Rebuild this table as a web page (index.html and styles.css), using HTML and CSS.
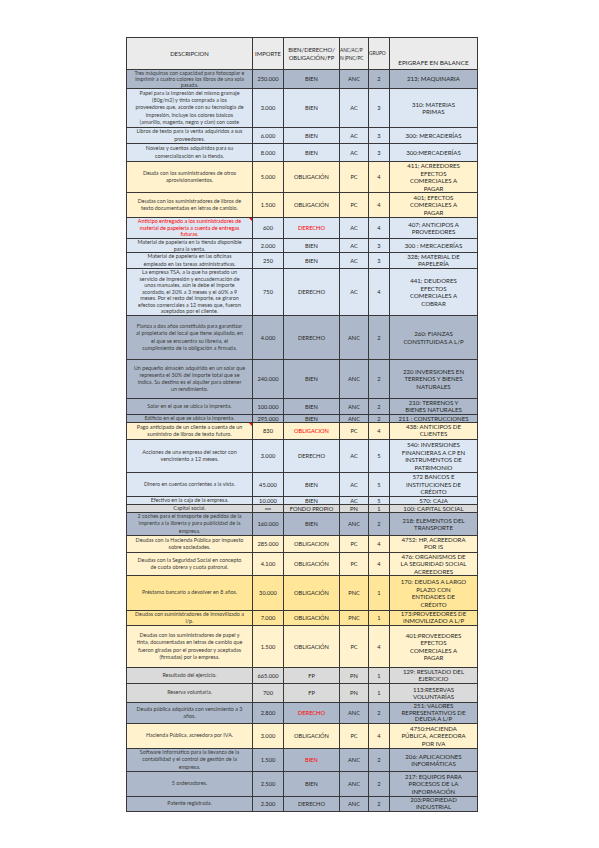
FILE: index.html
```html
<!DOCTYPE html>
<html lang="es">
<head>
<meta charset="utf-8">
<title>Clasificación de elementos patrimoniales</title>
<link rel="stylesheet" href="styles.css">
</head>
<body>
<div class="page">
  <div class="sheet">
    <div class="row head">
      <div class="h-desc">DESCRIPCION</div>
      <div class="h-imp">IMPORTE</div>
      <div class="h-bien">BIEN/DERECHO/<br>OBLIGACIÓN/FP</div>
      <div class="h-left h-anc">ANC/AC/P<br>N (PNC/PC</div>
      <div class="h-left h-grupo">GRUPO</div>
      <div class="h-epi">EPIGRAFE EN BALANCE</div>
    </div>

    <div class="row anc">
      <div class="desc lh6">Tres máquinas con capacidad para fotocopiar e<br>imprimir a cuatro colores los libros de una sola<br>pasada.</div>
      <div>250.000</div><div>BIEN</div><div>ANC</div><div>2</div><div class="epi">213; MAQUINARIA</div>
    </div>
    <div class="row ac">
      <div class="desc">Papel para la impresión del mismo gramaje<br>(80g/m2) y tinta comprada a los<br>proveedores que, acorde con su tecnología de<br>impresión, incluye los colores básicos<br>(amarillo, magenta, negro y cian) con coste</div>
      <div>3.000</div><div>BIEN</div><div>AC</div><div>3</div><div class="epi">310: MATERIAS<br>PRIMAS</div>
    </div>
    <div class="row ac">
      <div class="desc">Libros de texto para la venta adquiridos a sus<br>proveedores.</div>
      <div>6.000</div><div>BIEN</div><div>AC</div><div>3</div><div class="epi">300: MERCADERÍAS</div>
    </div>
    <div class="row ac">
      <div class="desc">Novelas y cuentos adquiridos para su<br>comercialización en la tienda.</div>
      <div>8.000</div><div>BIEN</div><div>AC</div><div>3</div><div class="epi">300:MERCADERÍAS</div>
    </div>
    <div class="row pc">
      <div class="desc">Deuda con los suministradores de otros<br>aprovisionamientos.</div>
      <div>5.000</div><div>OBLIGACIÓN</div><div>PC</div><div>4</div><div class="epi">411; ACREEDORES<br>EFECTOS<br>COMERCIALES A<br>PAGAR</div>
    </div>
    <div class="row pc">
      <div class="desc">Deudas con los suministradores de libros de<br>texto documentadas en letras de cambio.</div>
      <div>1.500</div><div>OBLIGACIÓN</div><div>PC</div><div>4</div><div class="epi">401; EFECTOS<br>COMERCIALES A<br>PAGAR</div>
    </div>
    <div class="row ac">
      <div class="desc lh65 red note">Anticipo entregado a los suministradores de<br>material de papelería a cuenta de entregas<br>futuras.</div>
      <div>600</div><div class="red">DERECHO</div><div>AC</div><div>4</div><div class="epi">407; ANTICIPOS A<br>PROVEEDORES</div>
    </div>
    <div class="row ac">
      <div class="desc lh65">Material de papelería en la tienda disponible<br>para la venta.</div>
      <div>2.000</div><div>BIEN</div><div>AC</div><div>3</div><div class="epi">300 : MERCADERÍAS</div>
    </div>
    <div class="row ac">
      <div class="desc">Material de papelería en las oficinas<br>empleado en las tareas administrativas.</div>
      <div>250</div><div>BIEN</div><div>AC</div><div>3</div><div class="epi tight">328; MATERIAL DE<br>PAPELERÍA</div>
    </div>
    <div class="row ac">
      <div class="desc lh65">La empresa TSA, a la que ha prestado un<br>servicio de impresión y encuadernación de<br>unos manuales, aún le debe el importe<br>acordado, el 20% a 3 meses y el 60% a 9<br>meses. Por el resto del importe, se giraron<br>efectos comerciales a 12 meses que, fueron<br>aceptados por el cliente.</div>
      <div>750</div><div>DERECHO</div><div>AC</div><div>4</div><div class="epi">441; DEUDORES<br>EFECTOS<br>COMERCIALES A<br>COBRAR</div>
    </div>
    <div class="row anc">
      <div class="desc">Fianza a dos años constituida para garantizar<br>al propietario del local que tiene alquilado, en<br>el que se encuentra su librería, el<br>cumplimiento de la obligación a firmada.</div>
      <div>4.000</div><div>DERECHO</div><div>ANC</div><div>2</div><div class="epi">260: FIANZAS<br>CONSTITUIDAS A L/P</div>
    </div>
    <div class="row anc">
      <div class="desc">Un pequeño almacén adquirido en un solar que<br>representa el 30% del importe total que se<br>indica. Su destino es el alquiler para obtener<br>un rendimiento.</div>
      <div>240.000</div><div>BIEN</div><div>ANC</div><div>2</div><div class="epi">220 INVERSIONES EN<br>TERRENOS Y BIENES<br>NATURALES</div>
    </div>
    <div class="row anc">
      <div class="desc">Solar en el que se ubica la imprenta.</div>
      <div>100.000</div><div>BIEN</div><div>ANC</div><div>2</div><div class="epi tight">210: TERRENOS Y<br>BIENES NATURALES</div>
    </div>
    <div class="row anc">
      <div class="desc lh7">Edificio en el que se ubica la imprenta.</div>
      <div>295.000</div><div>BIEN</div><div>ANC</div><div>2</div><div class="epi lh7">211 : CONSTRUCCIONES</div>
    </div>
    <div class="row pc">
      <div class="desc note">Pago anticipado de un cliente a cuenta de un<br>suministro de libros de texto futuro.</div>
      <div>830</div><div class="red">OBLIGACION</div><div>PC</div><div>4</div><div class="epi tight">438: ANTICIPOS DE<br>CLIENTES</div>
    </div>
    <div class="row ac">
      <div class="desc">Acciones de una empresa del sector con<br>vencimiento a 12 meses.</div>
      <div>3.000</div><div>DERECHO</div><div>AC</div><div>5</div><div class="epi">540: INVERSIONES<br>FINANCIERAS A CP EN<br>INSTRUMENTOS DE<br>PATRIMONIO</div>
    </div>
    <div class="row ac">
      <div class="desc">Dinero en cuentas corrientes a la vista.</div>
      <div>45.000</div><div>BIEN</div><div>AC</div><div>5</div><div class="epi">572 BANCOS E<br>INSTITUCIONES DE<br>CRÉDITO</div>
    </div>
    <div class="row ac">
      <div class="desc lh7">Efectivo en la caja de la empresa.</div>
      <div>10.000</div><div>BIEN</div><div>AC</div><div>5</div><div class="epi lh7">570: CAJA</div>
    </div>
    <div class="row pn">
      <div class="desc lh7">Capital social.</div>
      <div class="tiny">xxx</div><div>FONDO PROPIO</div><div>PN</div><div>1</div><div class="epi lh7">100: CAPITAL SOCIAL</div>
    </div>
    <div class="row anc">
      <div class="desc">2 coches para el transporte de pedidos de la<br>imprenta a la librería y para publicidad de la<br>empresa.</div>
      <div>160.000</div><div>BIEN</div><div>ANC</div><div>2</div><div class="epi">218: ELEMENTOS DEL<br>TRANSPORTE</div>
    </div>
    <div class="row pc">
      <div class="desc">Deudas con la Hacienda Pública por impuesto<br>sobre sociedades.</div>
      <div>285.000</div><div>OBLIGACION</div><div>PC</div><div>4</div><div class="epi tight">4752: HP, ACREEDORA<br>POR IS</div>
    </div>
    <div class="row pc">
      <div class="desc">Deudas con la Seguridad Social en concepto<br>de cuota obrera y cuota patronal.</div>
      <div>4.100</div><div>OBLIGACIÓN</div><div>PC</div><div>4</div><div class="epi">476: ORGANISMOS DE<br>LA SEGURIDAD SOCIAL<br>ACREEDORES</div>
    </div>
    <div class="row pnc">
      <div class="desc">Préstamo bancario a devolver en 8 años.</div>
      <div>30.000</div><div>OBLIGACIÓN</div><div>PNC</div><div>1</div><div class="epi">170: DEUDAS A LARGO<br>PLAZO CON<br>ENTIDADES DE<br>CRÉDITO</div>
    </div>
    <div class="row pnc">
      <div class="desc tight">Deudas con suministradores de inmovilizado a<br>l/p.</div>
      <div>7.000</div><div>OBLIGACIÓN</div><div>PNC</div><div>1</div><div class="epi tight">173:PROVEEDORES DE<br>INMOVILIZADO A L/P</div>
    </div>
    <div class="row pc">
      <div class="desc">Deudas con los suministradores de papel y<br>tinta, documentadas en letras de cambio que<br>fueron giradas por el proveedor y aceptadas<br>(firmadas) por la empresa.</div>
      <div>1.500</div><div>OBLIGACIÓN</div><div>PC</div><div>4</div><div class="epi">401:PROVEEDORES<br>EFECTOS<br>COMERCIALES A<br>PAGAR</div>
    </div>
    <div class="row pn">
      <div class="desc">Resultado del ejercicio.</div>
      <div>665.000</div><div>FP</div><div>PN</div><div>1</div><div class="epi tight">129: RESULTADO DEL<br>EJERCICIO</div>
    </div>
    <div class="row pn">
      <div class="desc">Reserva voluntaria.</div>
      <div>700</div><div>FP</div><div>PN</div><div>1</div><div class="epi">113:RESERVAS<br>VOLUNTARÍAS</div>
    </div>
    <div class="row anc">
      <div class="desc">Deuda pública adquirida con vencimiento a 3<br>años.</div>
      <div>2.800</div><div class="red">DERECHO</div><div>ANC</div><div>2</div><div class="epi lh65">251: VALORES<br>REPRESENTATIVOS DE<br>DEUDA A L/P</div>
    </div>
    <div class="row pc">
      <div class="desc">Hacienda Pública, acreedora por IVA.</div>
      <div>3.000</div><div>OBLIGACIÓN</div><div>PC</div><div>4</div><div class="epi">4750:HACIENDA<br>PÚBLICA, ACREEDORA<br>POR IVA</div>
    </div>
    <div class="row anc">
      <div class="desc">Software informático para la llevanza de la<br>contabilidad y el control de gestión de la<br>empresa.</div>
      <div>1.500</div><div class="red">BIEN</div><div>ANC</div><div>2</div><div class="epi">206: APLICACIONES<br>INFORMÁTICAS</div>
    </div>
    <div class="row anc">
      <div class="desc">5 ordenadores.</div>
      <div>2.500</div><div>BIEN</div><div>ANC</div><div>2</div><div class="epi">217: EQUIPOS PARA<br>PROCESOS DE LA<br>INFORMACIÓN</div>
    </div>
    <div class="row anc">
      <div class="desc">Patente registrada.</div>
      <div>2.300</div><div>DERECHO</div><div>ANC</div><div>2</div><div class="epi tight">203:PROPIEDAD<br>INDUSTRIAL</div>
    </div>
  </div>
</div>
</body>
</html>
```

FILE: styles.css
```css
* { box-sizing: border-box; }

html, body {
  margin: 0;
  padding: 0;
  background: #ffffff;
}

body {
  font-family: Lato, "Liberation Sans", sans-serif;
  color: #262626;
}

.page {
  display: flex;
  justify-content: flex-start;
  padding: 37px 0 0 126px;
}

.sheet {
  display: grid;
  grid-template-columns: 125px 30px 55px 28px 20px 87px;
  grid-template-rows:
    31px 18px 38px 15px 17px 30px 24px 20px 13px 15px 46px
    43px 38px 15px 7px 16px 32px 23px 7px 7px 22px 16px
    22px 34px 14px 41px 15px 18px 20px 24px 22px 24px 14px;
  gap: 1px;
  padding: 1px;
  background: #383838;
}

.row { display: contents; }

.row > div {
  display: flex;
  align-items: center;
  justify-content: center;
  text-align: center;
  overflow: hidden;
  font-size: 5.7px;
  line-height: 7.6px;
  padding: 0 1px;
}

.row > .desc {
  font-size: 5.4px;
  line-height: 7.2px;
  padding: 0 2px;
  white-space: nowrap;
  color: #3c3c3c;
}

.row > .epi {
  font-size: 6.1px;
  line-height: 7.5px;
  white-space: nowrap;
  padding: 0;
}

.row > .tight { line-height: 6.9px; }
.row > .lh7 { line-height: 7px; }
.row > .lh65 { line-height: 6.5px; }
.row > .lh6 { line-height: 6.1px; }

.row > .tiny { font-size: 4px; }

.row > .red { color: #ff0000; }

.note { position: relative; }
.note::after {
  content: "";
  position: absolute;
  top: 0;
  right: 0;
  border-top: 3px solid #ff0000;
  border-left: 3px solid transparent;
}

/* row fills */
.head > div { background: #ebebeb; font-size: 5.9px; }
.anc > div { background: #adb9ca; }
.ac > div { background: #dde7f4; }
.pc > div { background: #fff2cc; }
.pnc > div { background: #ffe699; }
.pn > div { background: #dadada; }

/* header alignment */
.head > .h-left {
  justify-content: flex-start;
  text-align: left;
  white-space: nowrap;
  padding: 0;
}
.head > .h-anc {
  font-size: 4.8px;
  line-height: 8px;
  letter-spacing: -0.1px;
}
.head > .h-grupo {
  font-size: 4.9px;
  letter-spacing: -0.1px;
}
.head > .h-epi {
  align-items: flex-end;
  padding-bottom: 2px;
  white-space: nowrap;
  font-size: 6.4px;
}
.head > .h-imp { padding: 0; }
```
